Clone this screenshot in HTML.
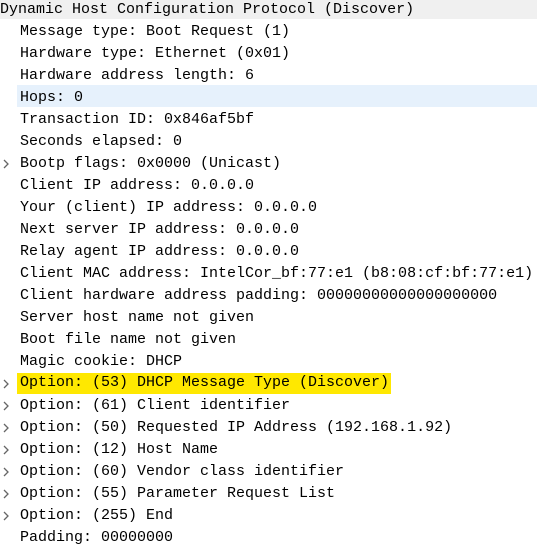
<!DOCTYPE html>
<html><head><style>
body{margin:0;width:537px;height:547px;overflow:hidden;background:#fff;font-family:"Liberation Mono",monospace;font-size:15px;color:#000}
.r{position:absolute;left:0;width:537px;height:22px;line-height:22px;white-space:pre}
.t{position:absolute;left:20px;top:2px}
.a{position:absolute;left:3px;top:8px;width:6px;height:10px}
.y{background:#ffe800;padding-right:2px;margin-left:-3px;padding-left:3px;display:inline-block;height:21px;line-height:20px}
</style></head><body>
<div class="r" style="top:-3px;background:#f0f0f0"><span style="position:absolute;left:0;top:2px">Dynamic Host Configuration Protocol (Discover)</span></div>
<div class="r" style="top:19px"><span class="t">Message type: Boot Request (1)</span></div>
<div class="r" style="top:41px"><span class="t">Hardware type: Ethernet (0x01)</span></div>
<div class="r" style="top:63px"><span class="t">Hardware address length: 6</span></div>
<div class="r" style="top:85px;left:17px;background:#e6f1fc"><span class="t" style="left:3px">Hops: 0</span></div>
<div class="r" style="top:107px"><span class="t">Transaction ID: 0x846af5bf</span></div>
<div class="r" style="top:129px"><span class="t">Seconds elapsed: 0</span></div>
<div class="r" style="top:151px"><svg class="a" viewBox="0 0 6 10"><polyline points="1,1 5,5 1,9" fill="none" stroke="#666" stroke-width="1.3"/></svg><span class="t">Bootp flags: 0x0000 (Unicast)</span></div>
<div class="r" style="top:173px"><span class="t">Client IP address: 0.0.0.0</span></div>
<div class="r" style="top:195px"><span class="t">Your (client) IP address: 0.0.0.0</span></div>
<div class="r" style="top:217px"><span class="t">Next server IP address: 0.0.0.0</span></div>
<div class="r" style="top:239px"><span class="t">Relay agent IP address: 0.0.0.0</span></div>
<div class="r" style="top:261px"><span class="t">Client MAC address: IntelCor_bf:77:e1 (b8:08:cf:bf:77:e1)</span></div>
<div class="r" style="top:283px"><span class="t">Client hardware address padding: 00000000000000000000</span></div>
<div class="r" style="top:305px"><span class="t">Server host name not given</span></div>
<div class="r" style="top:327px"><span class="t">Boot file name not given</span></div>
<div class="r" style="top:349px"><span class="t">Magic cookie: DHCP</span></div>
<div class="r" style="top:371px"><svg class="a" viewBox="0 0 6 10"><polyline points="1,1 5,5 1,9" fill="none" stroke="#666" stroke-width="1.3"/></svg><span class="t" style="top:1px"><span class="y">Option: (53) DHCP Message Type (Discover)</span></span></div>
<div class="r" style="top:393px"><svg class="a" viewBox="0 0 6 10"><polyline points="1,1 5,5 1,9" fill="none" stroke="#666" stroke-width="1.3"/></svg><span class="t">Option: (61) Client identifier</span></div>
<div class="r" style="top:415px"><svg class="a" viewBox="0 0 6 10"><polyline points="1,1 5,5 1,9" fill="none" stroke="#666" stroke-width="1.3"/></svg><span class="t">Option: (50) Requested IP Address (192.168.1.92)</span></div>
<div class="r" style="top:437px"><svg class="a" viewBox="0 0 6 10"><polyline points="1,1 5,5 1,9" fill="none" stroke="#666" stroke-width="1.3"/></svg><span class="t">Option: (12) Host Name</span></div>
<div class="r" style="top:459px"><svg class="a" viewBox="0 0 6 10"><polyline points="1,1 5,5 1,9" fill="none" stroke="#666" stroke-width="1.3"/></svg><span class="t">Option: (60) Vendor class identifier</span></div>
<div class="r" style="top:481px"><svg class="a" viewBox="0 0 6 10"><polyline points="1,1 5,5 1,9" fill="none" stroke="#666" stroke-width="1.3"/></svg><span class="t">Option: (55) Parameter Request List</span></div>
<div class="r" style="top:503px"><svg class="a" viewBox="0 0 6 10"><polyline points="1,1 5,5 1,9" fill="none" stroke="#666" stroke-width="1.3"/></svg><span class="t">Option: (255) End</span></div>
<div class="r" style="top:525px"><span class="t">Padding: 00000000</span></div>
</body></html>
